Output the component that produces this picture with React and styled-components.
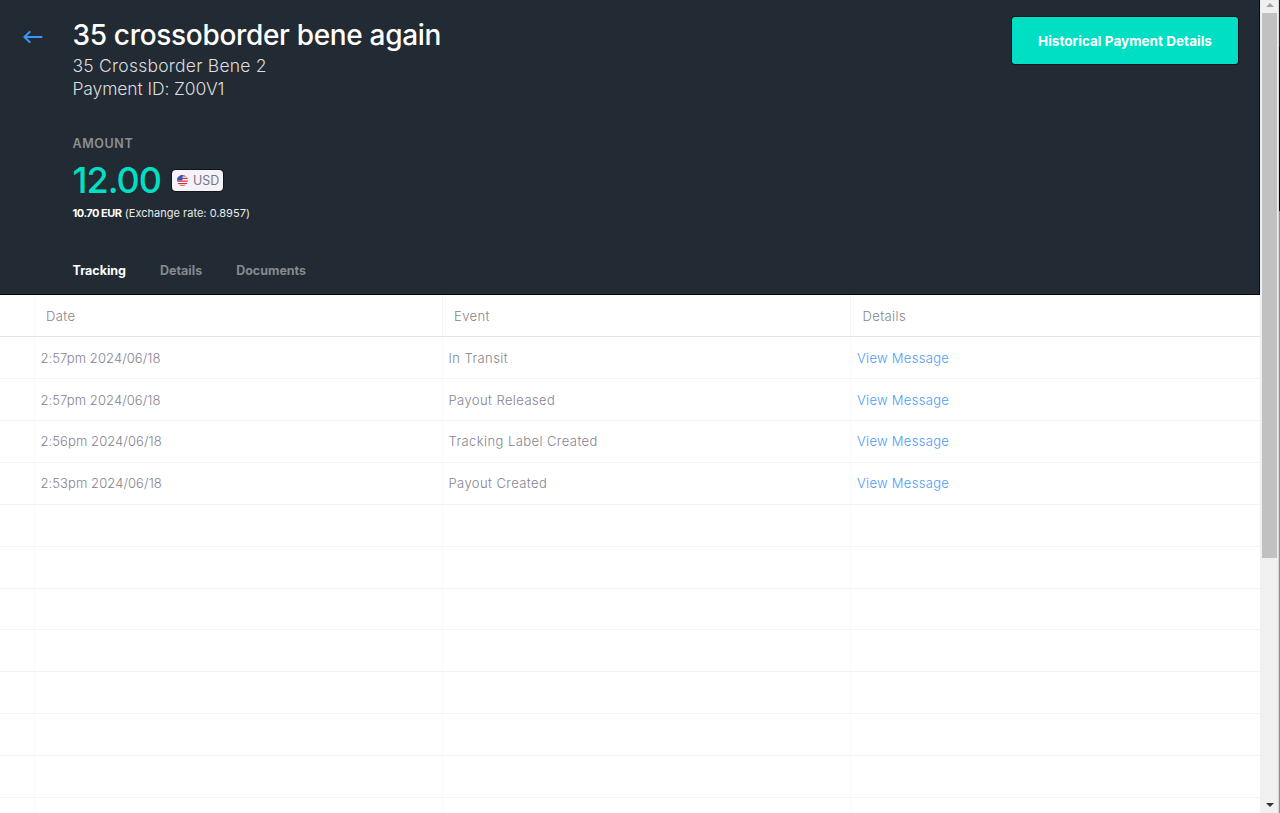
import React from 'react';
import styled, { createGlobalStyle } from 'styled-components';

const events = [
  { date: '2:57pm 2024/06/18', event: 'In Transit' },
  { date: '2:57pm 2024/06/18', event: 'Payout Released' },
  { date: '2:56pm 2024/06/18', event: 'Tracking Label Created' },
  { date: '2:53pm 2024/06/18', event: 'Payout Created' },
];

const emptyRows = Array.from({ length: 8 });

const BackArrow = () => (
  <svg width="20" height="14" viewBox="0 0 20 14" fill="none" stroke="#3f95f5" strokeWidth="2" strokeLinecap="round" strokeLinejoin="round">
    <path d="M18.6 7H1.4M6.6 2L1.4 7l5.2 5" />
  </svg>
);

const UsFlag = () => (
  <svg width="11" height="11" viewBox="0 0 12 12">
    <clipPath id="flag">
      <circle cx="6" cy="6" r="6" />
    </clipPath>
    <g clipPath="url(#flag)">
      <rect width="12" height="12" fill="#fff" />
      <path d="M0 .8h12M0 3.7h12M0 6.6h12M0 9.5h12M0 12h12" stroke="#e0263c" strokeWidth="1.45" />
      <rect width="6" height="6" fill="#2b5cb8" />
    </g>
  </svg>
);

const App = () => (
  <>
    <GlobalStyle />
    <Window>
      <Page>
        <Header>
          <BackButton type="button" aria-label="Back">
            <BackArrow />
          </BackButton>
          <Summary>
            <Title>35 crossoborder bene again</Title>
            <Subtitle $spacing="0.23px">35 Crossborder Bene 2</Subtitle>
            <Subtitle $spacing="-0.12px">Payment ID: Z00V1</Subtitle>
            <AmountLabel>AMOUNT</AmountLabel>
            <AmountRow>
              <Amount>12.00</Amount>
              <Currency>
                <UsFlag />
                <span>USD</span>
              </Currency>
            </AmountRow>
            <Exchange>
              <strong>10.70 EUR</strong> (Exchange rate: 0.8957)
            </Exchange>
            <Tabs>
              <Tab $active>Tracking</Tab>
              <Tab>Details</Tab>
              <Tab>Documents</Tab>
            </Tabs>
          </Summary>
          <HistoryButton type="button">Historical Payment Details</HistoryButton>
        </Header>
        <Table>
          <HeadRow>
            <Cell />
            <HeadCell>Date</HeadCell>
            <HeadCell>Event</HeadCell>
            <HeadCell>Details</HeadCell>
          </HeadRow>
          {events.map((item, i) => (
            <Row key={i}>
              <Cell />
              <Cell>{item.date}</Cell>
              <Cell $spacing="0.42px">{item.event}</Cell>
              <Cell $spacing="0.3px">
                <MessageLink>View Message</MessageLink>
              </Cell>
            </Row>
          ))}
          {emptyRows.map((_, i) => (
            <Row key={i}>
              <Cell />
              <Cell />
              <Cell />
              <Cell />
            </Row>
          ))}
        </Table>
      </Page>
      <Scrollbar>
        <ScrollArrow $up />
        <Thumb />
        <ScrollArrow />
      </Scrollbar>
      <Edge />
    </Window>
  </>
);

const GlobalStyle = createGlobalStyle`
  * {
    box-sizing: border-box;
  }

  body {
    margin: 0;
    overflow: hidden;
    font-family: Inter, "Open Sans", sans-serif;
  }
`;

const Window = styled.div`
  display: flex;
  width: 1280px;
  height: 813px;
  overflow: hidden;
  background: #fff;
`;

const Page = styled.main`
  width: 1260px;
  overflow: hidden;
`;

const Header = styled.header`
  display: flex;
  align-items: flex-start;
  height: 295px;
  padding: 17px 21px 0 23px;
  background: #222a33;
  border-right: 1px solid #05080c;
  border-bottom: 1px solid #05080c;
`;

const BackButton = styled.button`
  display: flex;
  width: 49.5px;
  padding: 13px 0 0;
  border: 0;
  background: none;
`;

const Summary = styled.div`
  flex: 1;
  white-space: nowrap;
`;

const Title = styled.h1`
  margin: 0 0 1px;
  font-size: 28px;
  font-weight: 500;
  line-height: 37px;
  letter-spacing: -0.32px;
  color: #fff;
`;

const Subtitle = styled.div`
  font-size: 17.5px;
  font-weight: 300;
  line-height: 22.5px;
  letter-spacing: ${(p) => p.$spacing};
  color: #dcdddf;
`;

const AmountLabel = styled.div`
  margin-top: 34px;
  font-size: 12.5px;
  font-weight: 600;
  line-height: 20px;
  letter-spacing: 0.6px;
  color: #8b8f94;
`;

const AmountRow = styled.div`
  display: flex;
  align-items: center;
  gap: 12.5px;
  height: 52px;
`;

const Amount = styled.div`
  width: 87px;
  font-size: 36px;
  font-weight: 500;
  letter-spacing: -1px;
  color: #00dfc4;
`;

const Currency = styled.div`
  display: flex;
  align-items: center;
  gap: 5px;
  width: 51px;
  height: 21px;
  padding-left: 5px;
  border-radius: 4px;
  background: #f5f3f8;
  box-shadow: 0 0 0 1px #11161d;
  font-size: 12.5px;
  color: #77748a;
`;

const Exchange = styled.div`
  font-size: 11px;
  font-weight: 400;
  line-height: 14px;
  letter-spacing: 0.02px;
  color: #e9eaeb;

  strong {
    font-weight: 700;
    letter-spacing: -0.48px;
    color: #fff;
  }
`;

const Tabs = styled.nav`
  display: flex;
  gap: 34px;
  margin-top: 41px;
`;

const Tab = styled.div`
  font-size: 12.5px;
  font-weight: 700;
  line-height: 20px;
  letter-spacing: 0;
  color: ${(p) => (p.$active ? '#fff' : '#858a8f')};
`;

const HistoryButton = styled.button`
  width: 226px;
  height: 47px;
  padding: 0;
  border: 0;
  border-radius: 3px;
  background: #00dfc4;
  box-shadow: 0 0 0 1px #0f131a;
  font-family: inherit;
  font-size: 13.5px;
  font-weight: 700;
  letter-spacing: 0.03px;
  color: #fff;
`;

const Table = styled.div`
  color: #85838f;
`;

const Row = styled.div`
  display: grid;
  grid-template-columns: 34.5px 408px 408.5px 1fr;
  height: 41.9px;
  border-bottom: 1px solid #f3f3f4;
`;

const HeadRow = styled(Row)`
  height: 42.2px;
  border-bottom-color: #e6e6e8;
`;

const Cell = styled.div`
  display: flex;
  align-items: center;
  padding-left: 6px;
  border-right: 1px solid #fafafb;
  font-size: 13px;
  font-weight: 300;
  letter-spacing: ${(p) => p.$spacing || '0.08px'};

  &:last-child {
    border-right: 0;
  }
`;

const HeadCell = styled(Cell)`
  padding-left: 11.5px;
  border-right-color: #f5f5f6;
  letter-spacing: 0.4px;
`;

const MessageLink = styled.a`
  color: #4b9cf8;
`;

const Scrollbar = styled.div`
  display: flex;
  flex-direction: column;
  align-items: center;
  width: 18px;
  padding-left: 1px;
  background: #f0f0f0;
`;

const ScrollArrow = styled.div`
  margin-top: ${(p) => (p.$up ? '3px' : 'auto')};
  margin-bottom: 6px;
  border: 4px solid transparent;
  border-top: ${(p) => (p.$up ? '0' : '4px solid #333')};
  border-bottom: ${(p) => (p.$up ? '4px solid #a3a3a3' : '0')};
`;

const Thumb = styled.div`
  width: 15px;
  height: 545px;
  background: #c1c1c1;
`;

const Edge = styled.div`
  width: 2px;
  border-left: 1px solid #d5d8da;
  background: linear-gradient(#142134 0 47px, #02040a 47px 211px, #8b9297 211px);
`;

export default App;
